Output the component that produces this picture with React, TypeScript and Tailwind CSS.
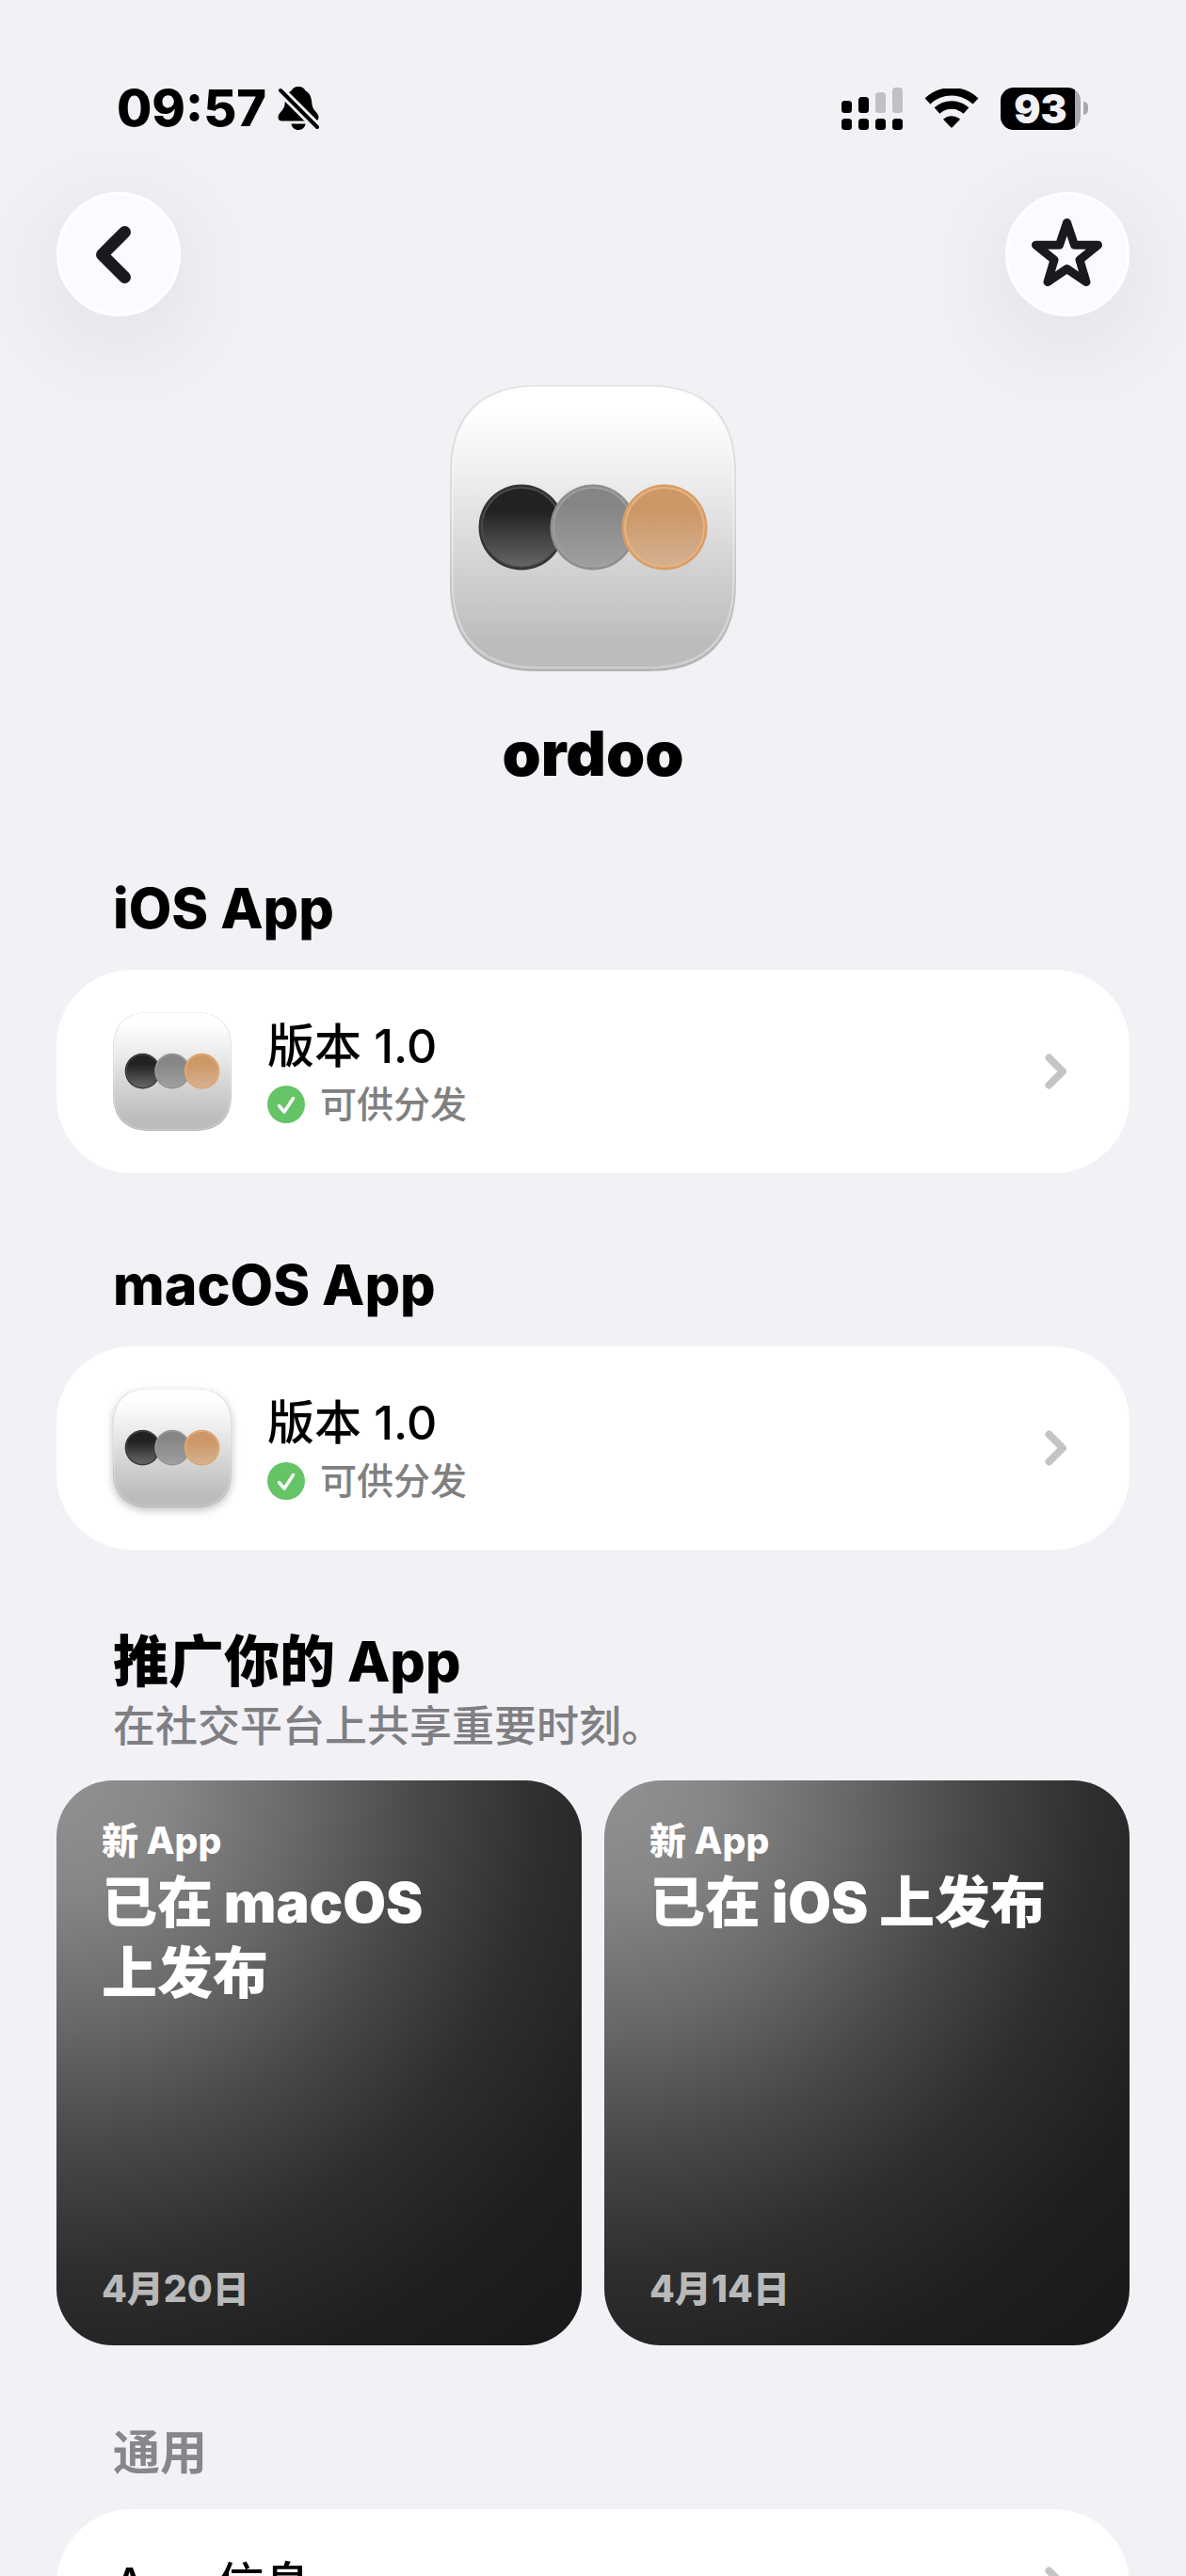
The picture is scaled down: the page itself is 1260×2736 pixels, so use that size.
import { useId } from 'react'

const squircle =
  'M92 0H212C272 0 304 32 304 92V212C304 272 272 304 212 304H92C32 304 0 272 0 212V92C0 32 32 0 92 0Z'

const builds = [
  { platform: 'iOS App', version: '版本 1.0', status: '可供分发', raised: false },
  { platform: 'macOS App', version: '版本 1.0', status: '可供分发', raised: true },
]

const promotions = [
  { id: 'macos', title: ['已在 macOS', '上发布'], date: '4月20日' },
  { id: 'ios', title: ['已在 iOS 上发布'], date: '4月14日' },
]

const AppIcon = ({ className }: { className: string }) => {
  const id = useId()

  return (
    <svg viewBox="0 0 304 304" className={className} aria-hidden="true">
      <defs>
        <linearGradient id={`${id}bg`} x1="0" y1="0" x2="0" y2="1">
          <stop offset="0.08" stopColor="#ffffff" />
          <stop offset="0.3" stopColor="#f0f0f0" />
          <stop offset="0.6" stopColor="#d6d6d6" />
          <stop offset="0.92" stopColor="#bcbcbc" />
        </linearGradient>
        <linearGradient id={`${id}edge`} x1="0" y1="0" x2="0" y2="1">
          <stop offset="0" stopColor="#e2e2e2" />
          <stop offset="0.4" stopColor="#dadada" />
          <stop offset="1" stopColor="#b2b2b2" />
        </linearGradient>
        <linearGradient id={`${id}glint`} x1="0" y1="0" x2="0" y2="1">
          <stop offset="0" stopColor="#ffffff" />
          <stop offset="0.5" stopColor="#efefef" />
          <stop offset="1" stopColor="#cdcdcd" />
        </linearGradient>
        <linearGradient id={`${id}black`} x1="0" y1="0" x2="0" y2="1">
          <stop offset="0.3" stopColor="#222222" />
          <stop offset="1" stopColor="#666666" />
        </linearGradient>
        <linearGradient id={`${id}gray`} x1="0" y1="0" x2="0" y2="1">
          <stop offset="0.2" stopColor="#858585" />
          <stop offset="1" stopColor="#9f9f9f" />
        </linearGradient>
        <linearGradient id={`${id}orange`} x1="0" y1="0" x2="0" y2="1">
          <stop offset="0.3" stopColor="#cc9867" />
          <stop offset="1" stopColor="#d5b192" />
        </linearGradient>
      </defs>
      <path d={squircle} fill={`url(#${id}edge)`} />
      <path d={squircle} fill={`url(#${id}glint)`} transform="translate(2 1.5) scale(.987)" />
      <path d={squircle} fill={`url(#${id}bg)`} transform="translate(3.5 2) scale(.977)" />
      <circle cx="76" cy="151" r="45.5" fill="#353535" />
      <circle cx="76" cy="151" r="42" fill={`url(#${id}black)`} stroke="#505050" strokeWidth="1.5" />
      <circle cx="152" cy="151" r="45.5" fill="#8e8e8e" />
      <circle cx="152" cy="151" r="42" fill={`url(#${id}gray)`} stroke="#a3a3a3" strokeWidth="1.5" />
      <circle cx="228" cy="151" r="45.5" fill="#d89d67" />
      <circle cx="228" cy="151" r="42" fill={`url(#${id}orange)`} stroke="#e9b27e" strokeWidth="2" />
    </svg>
  )
}

const BellOff = () => (
  <svg viewBox="0 0 44 48" className="h-12 w-11" aria-hidden="true">
    <path
      d="M22 1C26 1 28.5 3 29.5 5.5C35 8 36 14 36.5 20C37 26 43.5 29 43.5 33.5C43.5 36 42 37.5 39.5 37.5H4.5C2 37.5 .5 36 .5 33.5C.5 29 7 26 7.5 20C8 14 9 8 14.5 5.5C15.5 3 18 1 22 1Z"
      fill="#000"
    />
    <path d="M14.5 40.5H29.5C29 44.5 26 47 22 47S15 44.5 14.5 40.5Z" fill="#000" />
    <path d="M3 5L42 44" stroke="#f2f1f6" strokeWidth="10" />
    <path d="M3 5L42 44" stroke="#000" strokeWidth="4" strokeLinecap="round" />
  </svg>
)

const Signal = () => (
  <svg viewBox="0 0 65 45" className="h-[45px] w-[65px]" aria-hidden="true">
    <rect x="0" y="14" width="11" height="13" rx="3.5" />
    <rect x="18" y="10" width="11" height="17" rx="3.5" />
    <rect x="36" y="5" width="11" height="22" rx="3.5" fill="#c1c0c5" />
    <rect x="54" y="0" width="11" height="27" rx="3.5" fill="#c1c0c5" />
    <rect x="0" y="33" width="11" height="12" rx="3.5" />
    <rect x="18" y="33" width="11" height="12" rx="3.5" />
    <rect x="36" y="33" width="11" height="12" rx="3.5" />
    <rect x="54" y="33" width="11" height="12" rx="3.5" />
  </svg>
)

const Wifi = () => (
  <svg viewBox="0 0 58 42" className="h-[42px] w-[58px]" aria-hidden="true">
    <path d="M3.5 13.5A37 37 0 0 1 54.5 13.5" fill="none" stroke="#000" strokeWidth="8.5" />
    <path d="M13.5 23.5A23 23 0 0 1 44.5 23.5" fill="none" stroke="#000" strokeWidth="8.5" />
    <path d="M20 32.8A13.5 13.5 0 0 1 38 32.8L29.8 41.2Q29 42 28.2 41.2Z" />
  </svg>
)

const StatusBar = () => (
  <div className="flex h-[54px] items-center justify-between pr-[44px] pl-[64px]">
    <div className="flex items-center gap-3">
      <span className="text-[54px] leading-[54px] font-extrabold">09:57</span>
      <BellOff />
    </div>
    <div className="flex items-center gap-[23px]">
      <Signal />
      <Wifi />
      <div className="flex items-center gap-[3px]">
        <div className="flex h-[45px] w-[85px] items-center justify-center rounded-[14px] bg-[linear-gradient(90deg,#000_79px,#a9a8ac_79px)]">
          <span className="text-[42px] leading-[45px] font-black text-[#f2f1f6]">93</span>
        </div>
        <div className="h-[14px] w-[5px] rounded-r-full bg-[#a9a8ac]" />
      </div>
    </div>
  </div>
)

const roundButton =
  'size-[132px] rounded-full border-3 border-white bg-[#fbfbff] shadow-[0_24px_120px_rgba(0,0,0,0.1)]'

const Toolbar = () => (
  <div className="mt-[62px] flex justify-between">
    <button type="button" aria-label="返回" className={roundButton}>
      <svg viewBox="3 3 126 126" className="size-full" fill="none" stroke="#1a191e" aria-hidden="true">
        <path d="M72.5 42.5L48.5 66.5L72.5 90.5" strokeWidth="13" strokeLinecap="round" strokeLinejoin="round" />
      </svg>
    </button>
    <button type="button" aria-label="收藏" className={roundButton}>
      <svg viewBox="3 3 126 126" className="size-full" fill="none" stroke="#1a191e" aria-hidden="true">
        <path
          d="M65.5 32.5L73.5 56.2H98.5L79 72L86 95.5L65.5 81.5L45 95.5L52 72L32.5 56.2H57.5Z"
          strokeWidth="9"
          strokeLinejoin="round"
        />
      </svg>
    </button>
  </div>
)

const Chevron = () => (
  <svg viewBox="0 0 24 38" className="h-[38px] w-6 shrink-0" fill="none" stroke="#c4c4c4" aria-hidden="true">
    <path d="M4.5 4.5L19 19L4.5 33.5" strokeWidth="8" strokeLinecap="round" strokeLinejoin="round" />
  </svg>
)

const CheckBadge = () => (
  <svg viewBox="0 0 40 40" className="size-10" aria-hidden="true">
    <circle cx="20" cy="20" r="20" fill="#65c466" />
    <path
      d="M12.5 21.5L18 28L27.5 13.5"
      fill="none"
      stroke="#fff"
      strokeWidth="3.5"
      strokeLinecap="round"
      strokeLinejoin="round"
    />
  </svg>
)

const BuildSection = ({ platform, version, status, raised }: (typeof builds)[number]) => (
  <section className="mt-[84px]">
    <h2 className="mb-[30px] px-[60px] text-[59px] leading-[70px] font-extrabold">{platform}</h2>
    <a href="#" className="flex items-center rounded-[80px] bg-white py-[45px] pr-[66px] pl-[60px]">
      <AppIcon
        className={
          raised ? 'size-[126px] drop-shadow-[0_3px_4px_rgba(0,0,0,0.25)]' : 'size-[126px]'
        }
      />
      <div className="ml-[38px] flex-1">
        <p className="text-[50px] leading-[70px] font-medium">{version}</p>
        <p className="flex items-center gap-4 text-[39px] leading-[54px] font-medium text-[#808080]">
          <CheckBadge />
          {status}
        </p>
      </div>
      <Chevron />
    </a>
  </section>
)

const PromoCard = ({ title, date }: (typeof promotions)[number]) => (
  <a
    href="#"
    className="flex h-[600px] flex-1 flex-col rounded-[60px] bg-[radial-gradient(circle_at_0_0,#929292_0,#868686_120px,#686868_260px,#484848_390px,#2e2e2e_520px,#1f1f1f_660px,#191919_800px)] px-12 pt-10 pb-9 font-extrabold text-white"
  >
    <span className="text-[39px] leading-12">新 App</span>
    <span className="mt-1 flex-1 text-[59px] leading-[75px] font-black">
      {title.map((line) => (
        <span key={line} className="block">
          {line}
        </span>
      ))}
    </span>
    <span className="text-[39px] leading-12 text-[#b9b9b9]">{date}</span>
  </a>
)

export default function App() {
  return (
    <main
      lang="zh-CN"
      className="h-screen overflow-hidden bg-[#f2f1f6] px-[60px] pt-[88px] font-[Inter,'Noto_Sans_CJK_SC',sans-serif] text-black"
    >
      <StatusBar />
      <Toolbar />

      <div className="mt-[73px] flex flex-col items-center">
        <AppIcon className="size-[304px]" />
        <h1 className="mt-[47px] text-[66px] leading-[80px] font-black">ordoo</h1>
      </div>

      <div className="pt-[6px]">
        {builds.map((build) => (
          <BuildSection key={build.platform} {...build} />
        ))}
      </div>

      <section className="mt-[84px]">
        <h2 className="px-[60px] text-[59px] leading-[70px] font-extrabold">推广你的 App</h2>
        <p className="mt-1 mb-[27px] px-[60px] text-[45px] leading-[60px] font-medium text-[#7f7f83]">
          在社交平台上共享重要时刻。
        </p>
        <div className="flex gap-6">
          {promotions.map((promotion) => (
            <PromoCard key={promotion.id} {...promotion} />
          ))}
        </div>
      </section>

      <section className="mt-[84px]">
        <h2 className="mb-[30px] px-[60px] text-[50px] leading-[60px] font-bold text-[#86868b]">
          通用
        </h2>
        <a href="#" className="flex items-center justify-between rounded-t-[80px] bg-white py-[45px] pr-[66px] pl-[60px]">
          <span className="text-[50px] leading-[70px] font-medium">App 信息</span>
          <Chevron />
        </a>
      </section>
    </main>
  )
}
